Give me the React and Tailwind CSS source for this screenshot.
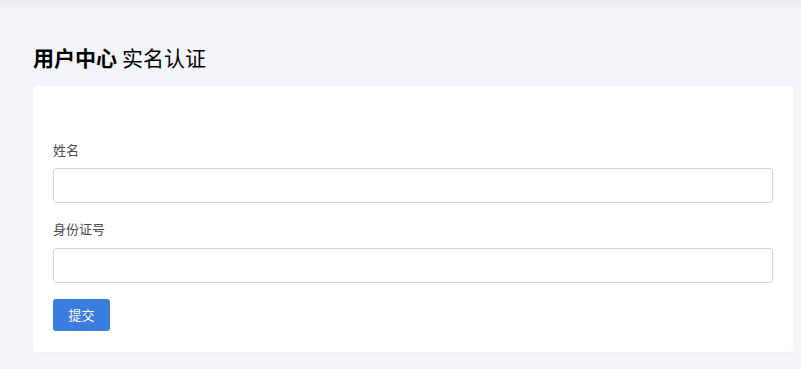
export default function App() {
  return (
    <div
      className="min-h-[369px] bg-[#f4f5f9] shadow-[inset_0_10px_12px_-8px_rgba(0,0,0,0.07)] pt-[42px] pb-[17px] pl-[33px] pr-[8px]"
      style={{ fontFamily: '"Noto Sans CJK SC", "Noto Sans", sans-serif' }}
    >
      <h1 className="flex items-baseline gap-[5px] text-[21px] leading-[30px] text-black">
        <span className="font-bold">用户中心</span>
        <span className="font-normal">实名认证</span>
      </h1>
      <div className="mt-[14px] bg-white rounded-[4px] shadow-[0_1px_3px_rgba(0,0,0,0.03)] px-[20px] pt-[54px] pb-[21px]">
        <label className="block text-[13px] leading-[20px] text-[#4a4a4a]">姓名</label>
        <input className="mt-[8px] block w-full h-[35px] rounded-[3px] border border-[#d3d6dc] bg-white px-3 text-[13px] outline-none" />
        <label className="mt-[16px] block text-[13px] leading-[20px] text-[#4a4a4a]">身份证号</label>
        <input className="mt-[9px] block w-full h-[35px] rounded-[3px] border border-[#d3d6dc] bg-white px-3 text-[13px] outline-none" />
        <button className="mt-[16px] block h-[32px] w-[57px] rounded-[3px] bg-[#3b7ddf] text-white text-[13px]">
          提交
        </button>
      </div>
    </div>
  )
}
